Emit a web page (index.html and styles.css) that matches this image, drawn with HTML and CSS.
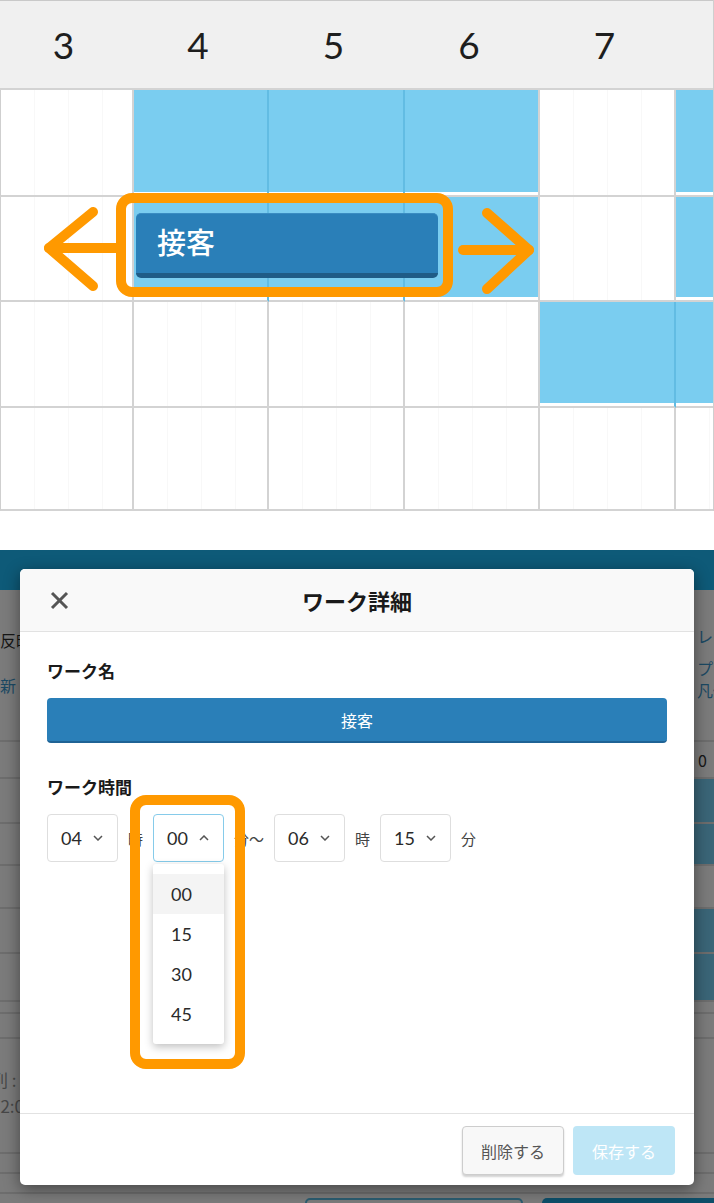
FILE: index.html
```html
<!DOCTYPE html>
<html lang="ja">

<head>
    <meta charset="UTF-8">
    <meta name="viewport" content="width=device-width, initial-scale=1.0">
    <title>ワーク詳細</title>
    <link rel="stylesheet" href="styles.css">
</head>

<body>
    <!-- Vista del horario -->
    <section class="schedule">
        <div class="hours">
            <span>3</span>
            <span>4</span>
            <span>5</span>
            <span>6</span>
            <span>7</span>
            <span></span>
        </div>

        <div class="slots">
            <div class="slot"></div>
            <div class="slot busy join"></div>
            <div class="slot busy join"></div>
            <div class="slot busy"></div>
            <div class="slot"></div>
            <div class="slot busy last"></div>

            <div class="slot"></div>
            <div class="slot busy join"></div>
            <div class="slot busy join"></div>
            <div class="slot busy"></div>
            <div class="slot"></div>
            <div class="slot busy last"></div>

            <div class="slot"></div>
            <div class="slot"></div>
            <div class="slot"></div>
            <div class="slot"></div>
            <div class="slot busy join"></div>
            <div class="slot busy last"></div>

            <div class="slot"></div>
            <div class="slot"></div>
            <div class="slot"></div>
            <div class="slot"></div>
            <div class="slot"></div>
            <div class="slot last"></div>
        </div>

        <div class="work-bar">接客</div>

        <!-- Flechas y marco naranja -->
        <svg class="marks" width="714" height="511" viewBox="0 0 714 511">
            <rect x="121" y="198" width="327" height="94" rx="11" />
            <polyline points="93,212 49,248 93,286" />
            <line x1="49" y1="248" x2="118" y2="248" />
            <polyline points="487,213 529,250 487,289" />
            <line x1="463" y1="250" x2="529" y2="250" />
        </svg>
    </section>

    <!-- Modal de detalle -->
    <section class="screen">
        <div class="topbar"></div>

        <div class="page">
            <div class="toolbar">
                <div class="tool-left">
                    <span class="dark">反映</span>
                    <span class="link cut">更新</span>
                </div>
                <div class="tool-right">
                    <span class="link">レを</span>
                    <span class="link">プラ</span>
                    <span class="link">凡例</span>
                </div>
            </div>

            <div class="table">
                <div class="row r0"><span></span><span class="cell dark">0</span></div>
                <div class="row r1"><span></span><span class="cell teal"></span></div>
                <div class="row r2"><span></span><span class="cell teal"></span></div>
                <div class="row r3"><span></span><span class="cell"></span></div>
                <div class="row r4"><span></span><span class="cell teal"></span></div>
                <div class="row r5"><span></span><span class="cell teal"></span></div>
                <div class="row r6"><span></span><span class="cell"></span></div>
                <div class="row r7"><span></span><span class="cell"></span></div>
                <div class="row r8">
                    <div class="notes">
                        <span class="cut-a">削 :</span>
                        <span class="cut-b">12:00</span>
                    </div>
                    <span class="cell"></span>
                </div>
                <div class="row r9"><span></span><span class="cell"></span></div>
                <div class="row r10"><span></span><span class="cell"></span></div>
            </div>

            <div class="actions">
                <div class="ghost"></div>
                <div class="solid"></div>
            </div>
        </div>

        <div class="modal">
            <div class="modal-head">
                <svg class="close" width="19" height="19" viewBox="0 0 19 19">
                    <line x1="2" y1="2" x2="17" y2="17" />
                    <line x1="17" y1="2" x2="2" y2="17" />
                </svg>
                <h2>ワーク詳細</h2>
                <span></span>
            </div>

            <div class="modal-body">
                <div class="label">ワーク名</div>
                <div class="work-name">接客</div>

                <div class="label time-label">ワーク時間</div>
                <div class="time-row">
                    <div class="select">04
                        <svg width="10" height="6" viewBox="0 0 10 6"><polyline points="1,1 5,5 9,1" /></svg>
                    </div>
                    <span class="unit">時</span>
                    <div class="select-wrap">
                        <div class="select open">00
                            <svg width="10" height="6" viewBox="0 0 10 6"><polyline points="1,5 5,1 9,5" /></svg>
                        </div>
                        <ul class="menu">
                            <li class="active">00</li>
                            <li>15</li>
                            <li>30</li>
                            <li>45</li>
                        </ul>
                    </div>
                    <span class="unit">分〜</span>
                    <div class="select">06
                        <svg width="10" height="6" viewBox="0 0 10 6"><polyline points="1,1 5,5 9,1" /></svg>
                    </div>
                    <span class="unit">時</span>
                    <div class="select">15
                        <svg width="10" height="6" viewBox="0 0 10 6"><polyline points="1,1 5,5 9,1" /></svg>
                    </div>
                    <span class="unit">分</span>
                </div>
            </div>

            <div class="modal-foot">
                <button class="btn-delete">削除する</button>
                <button class="btn-save">保存する</button>
            </div>
        </div>

        <div class="highlight"></div> <!-- Marco naranja del desplegable -->
    </section>
</body>

</html>
```

FILE: styles.css
```css
body {
    margin: 0;
    width: 714px;
    background-color: #fff;
    font-family: "Noto Sans CJK JP", "Noto Sans", sans-serif;
    color: #222;
}

/* ---------- Horario ---------- */
.schedule {
    position: relative;
    height: 511px;
    border-right: 1px solid #cfcfcf;
}

.hours,
.slots {
    display: grid;
    grid-template-columns: 134px 135px 136px 135px 136px 1fr;
}

.hours {
    height: 87px;
    background-color: #f0f0f0;
    border-top: 1px solid #c9c9c9;
    border-bottom: 2px solid #d3d3d3;
}

.hours span {
    display: flex;
    align-items: center;
    justify-content: center;
    padding-right: 7px;
    font-family: Lato, "Open Sans", sans-serif;
    font-weight: 400;
    font-size: 37px;
    color: #1e1e1e;
}

.slots {
    grid-template-rows: 107px 105px 106px 103px;
}

.slot {
    box-sizing: border-box;
    border-right: 2px solid #d3d3d3;
    border-bottom: 2px solid #d3d3d3;
    background-color: #fff;
    background-image: repeating-linear-gradient(90deg, transparent 0 33px, #f8f8f8 33px 34px);
}

.slot:nth-child(6n+1) {
    border-left: 1px solid #cfcfcf;
}

.slot.last {
    border-right: none;
}

.slot.busy {
    background-color: #7acdf0;
    background-image: none;
    box-shadow: inset 0 -3px 0 #fff;
}

.slot.join {
    border-right-color: #62bce3;
}

.work-bar {
    position: absolute;
    left: 136px;
    top: 213px;
    width: 302px;
    height: 65px;
    box-sizing: border-box;
    padding: 0 0 5px 21px;
    display: flex;
    align-items: center;
    background-color: #2a7fb8;
    border-top: 1px solid #3a8cc2;
    border-bottom: 5px solid #1f5c87;
    border-radius: 5px;
    color: #fff;
    font-size: 29px;
    font-weight: 500;
}

.marks {
    position: absolute;
    left: 0;
    top: 0;
    pointer-events: none;
}

.marks rect,
.marks polyline,
.marks line {
    fill: none;
    stroke: #ff9900;
    stroke-width: 10;
    stroke-linecap: round;
    stroke-linejoin: round;
}

/* ---------- Pantalla con modal ---------- */
.screen {
    position: relative;
    margin-top: 39px;
    height: 653px;
    overflow: hidden;
    background-color: #7b7b7b;
}

.topbar {
    height: 40px;
    background-color: #0e5a78;
}

.toolbar {
    height: 150px;
    display: flex;
    justify-content: space-between;
    font-size: 16px;
}

.tool-left {
    display: flex;
    flex-direction: column;
    padding-top: 38px;
    line-height: 24px;
}

.tool-left .cut {
    margin-top: 21px;
    margin-left: -16px;
}

.tool-right {
    display: flex;
    flex-direction: column;
    padding-top: 35px;
    padding-left: 3px;
    width: 20px;
    box-sizing: border-box;
    line-height: 22px;
    white-space: nowrap;
}

.tool-right span:nth-child(2) {
    margin-top: 10px;
}

.dark {
    color: #161616;
}

.link {
    color: #1b4963;
}

.table {
    border-top: 2px solid #6d6d6d;
}

.row {
    display: flex;
    justify-content: space-between;
    border-bottom: 2px solid #6d6d6d;
    box-sizing: border-box;
}

.row .cell {
    width: 20px;
    font-size: 16px;
    padding-left: 4px;
    box-sizing: border-box;
}

.cell.teal {
    background-color: #3a6577;
}

.r0 { height: 37px; align-items: center; }
.r1 { height: 45px; }
.r2 { height: 42px; }
.r3 { height: 43px; }
.r4 { height: 45px; }
.r5 { height: 48px; }
.r6 { height: 12px; }
.r7 { height: 25px; }
.r8 { height: 115px; }
.r9 { height: 20px; }
.r10 { height: 20px; }

.notes {
    display: flex;
    flex-direction: column;
    padding-top: 28px;
    font-size: 17px;
    line-height: 26px;
    color: #474747;
}

.cut-a,
.cut-b {
    margin-left: -9px;
}

.actions {
    display: flex;
    padding-top: 4px;
    padding-left: 305px;
    gap: 19px;
}

.ghost {
    width: 218px;
    height: 30px;
    box-sizing: border-box;
    border: 2px solid #2b5c70;
    border-radius: 5px;
}

.solid {
    flex: 1;
    height: 30px;
    background-color: #0d4e69;
    border-radius: 5px 0 0 0;
}

/* ---------- Modal ---------- */
.modal {
    position: absolute;
    left: 20px;
    top: 19px;
    width: 674px;
    height: 616px;
    display: flex;
    flex-direction: column;
    background-color: #fff;
    border-radius: 5px;
    box-shadow: 0 4px 16px rgba(0, 0, 0, 0.45);
}

.modal-head {
    height: 62px;
    display: grid;
    grid-template-columns: 1fr auto 1fr;
    align-items: center;
    background-color: #f9f9f9;
    border-bottom: 1px solid #e2e2e2;
    border-radius: 5px 5px 0 0;
}

.close {
    margin-left: 30px;
}

.close line {
    stroke: #555;
    stroke-width: 3;
}

.modal-head h2 {
    margin: 0;
    font-size: 22px;
    font-weight: 700;
    color: #1a1a1a;
}

.modal-body {
    flex: 1;
    padding: 27px 27px 0;
}

.label {
    font-size: 17px;
    font-weight: 700;
    line-height: 24px;
    color: #1a1a1a;
}

.work-name {
    margin-top: 15px;
    height: 45px;
    box-sizing: border-box;
    display: flex;
    align-items: center;
    justify-content: center;
    background-color: #2a7fb8;
    border-bottom: 2px solid #1f6395;
    border-radius: 4px;
    color: #fff;
    font-size: 16px;
}

.time-label {
    margin-top: 32px;
}

.time-row {
    margin-top: 15px;
    display: flex;
    align-items: center;
    gap: 10px;
}

.select-wrap {
    position: relative;
}

.select {
    width: 71px;
    height: 48px;
    box-sizing: border-box;
    display: flex;
    align-items: center;
    gap: 11px;
    padding-left: 13px;
    border: 1px solid #dedede;
    border-radius: 4px;
    font-family: Lato, "Open Sans", sans-serif;
    font-size: 18px;
    color: #2a2a2a;
}

.select svg polyline {
    fill: none;
    stroke: #555;
    stroke-width: 1.5;
}

.select.open {
    border-color: #86cbea;
}

.unit {
    font-size: 15px;
    color: #444;
}

.menu {
    position: absolute;
    top: calc(100% + 2px);
    left: 0;
    width: 71px;
    margin: 0;
    padding: 10px 0;
    list-style: none;
    background-color: #fff;
    border-radius: 3px;
    box-shadow: 0 3px 9px rgba(0, 0, 0, 0.25);
}

.menu li {
    height: 40px;
    line-height: 40px;
    padding-left: 18px;
    font-family: Lato, "Open Sans", sans-serif;
    font-size: 18px;
    color: #2a2a2a;
}

.menu li.active {
    background-color: #f4f4f4;
}

.modal-foot {
    height: 72px;
    display: flex;
    justify-content: flex-end;
    align-items: flex-start;
    gap: 9px;
    padding: 12px 19px 0;
    box-sizing: border-box;
    border-top: 1px solid #e2e2e2;
}

.modal-foot button {
    height: 49px;
    width: 102px;
    border-radius: 4px;
    font-family: "Noto Sans CJK JP", sans-serif;
    font-size: 16px;
    cursor: pointer;
}

.btn-delete {
    background-color: #f8f8f8;
    border: 1px solid #cdcdcd;
    color: #555;
    box-shadow: 0 2px 2px rgba(0, 0, 0, 0.18);
}

.btn-save {
    background-color: #bee6f6;
    border: none;
    color: #fff;
}

/* Marco naranja sobre el desplegable */
.highlight {
    position: absolute;
    left: 130px;
    top: 245px;
    width: 115px;
    height: 274px;
    box-sizing: border-box;
    border: 10px solid #ff9900;
    border-radius: 16px;
    pointer-events: none;
}
```
